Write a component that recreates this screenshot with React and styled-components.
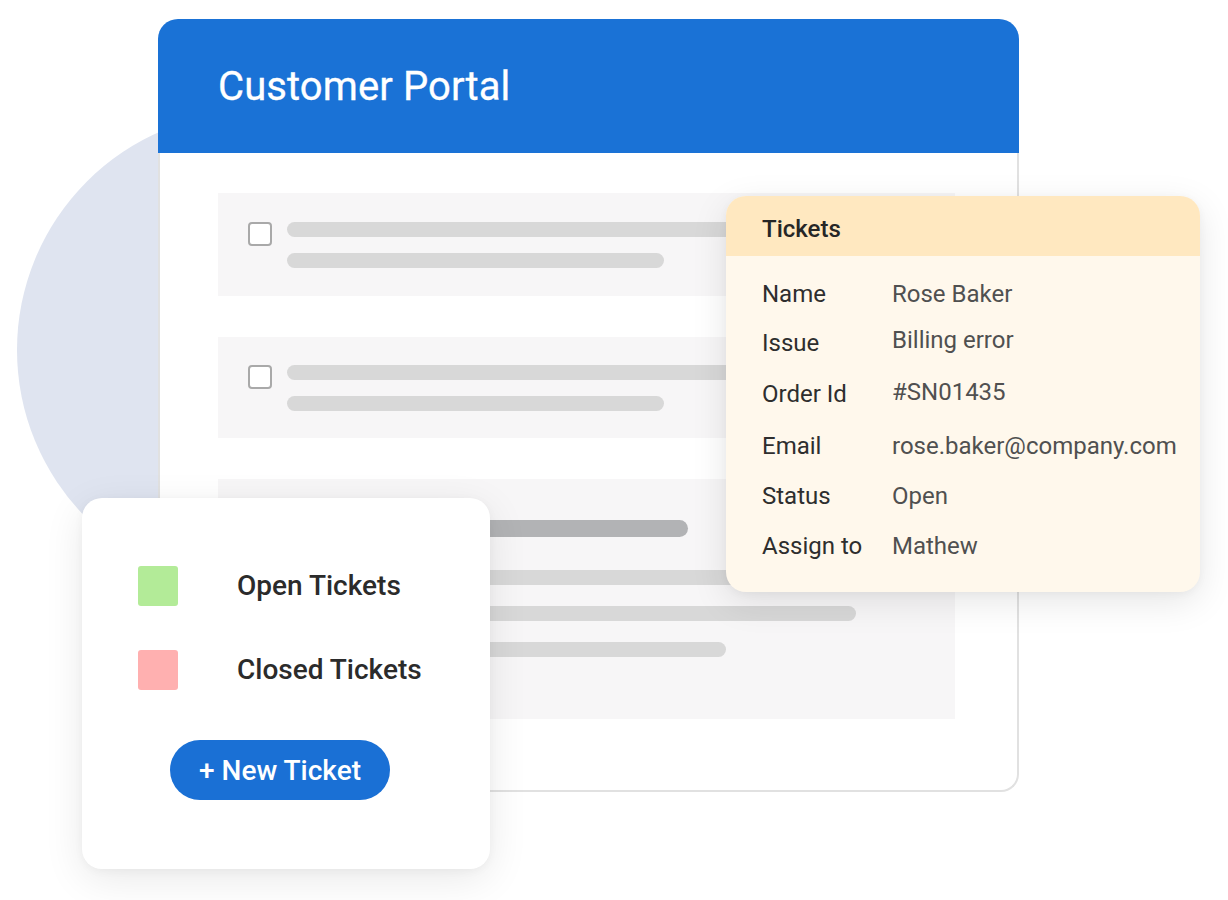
import React from "react";
import styled, { createGlobalStyle } from "styled-components";

const Global = createGlobalStyle`
  html, body { margin: 0; padding: 0; background: #ffffff; }
  body { font-family: Roboto, "Noto Sans", "Liberation Sans", sans-serif; }
  * { box-sizing: border-box; }
`;

const Stage = styled.div`
  position: relative;
  width: 1228px;
  height: 900px;
  overflow: hidden;
  padding: 19px 0 0 158px;
  background: #ffffff;
`;

const Blob = styled.div`
  position: absolute;
  left: 17px;
  top: 112px;
  width: 476px;
  height: 476px;
  border-radius: 50%;
  background: #dfe4f0;
  z-index: 0;
`;

const Window = styled.section`
  position: relative;
  z-index: 1;
  width: 861px;
  height: 773px;
  display: flex;
  flex-direction: column;
`;

const Header = styled.header`
  height: 134px;
  flex: none;
  background: #1a72d6;
  border-radius: 20px 20px 0 0;
  display: flex;
  align-items: center;
  padding-left: 60px;
`;

const Title = styled.h1`
  margin: 0;
  color: #ffffff;
  font-size: 40px;
  font-weight: 400;
  letter-spacing: 0.1px;
  -webkit-text-stroke: 0.3px #ffffff;
`;

const Body = styled.div`
  flex: 1;
  background: #ffffff;
  border: 2px solid #e1e1e1;
  border-top: none;
  border-radius: 0 0 18px 18px;
  padding: 40px 62px 0 58px;
  display: flex;
  flex-direction: column;
  gap: 41px;
`;

const Row = styled.div`
  background: #f7f6f7;
  height: ${(p) => p.$h}px;
  padding: ${(p) => p.$pt}px 0 0 30px;
  display: flex;
  align-items: flex-start;
  gap: 15px;
`;

const Check = styled.span`
  width: 24px;
  height: 24px;
  flex: none;
  border: 2px solid #a9a9a9;
  border-radius: 4px;
  background: #ffffff;
`;

const Lines = styled.div`
  display: flex;
  flex-direction: column;
  gap: ${(p) => p.$gap ?? 16}px;
  padding-left: ${(p) => p.$pl ?? 0}px;
`;

const Bar = styled.div`
  width: ${(p) => p.$w}px;
  height: ${(p) => p.$h || 15}px;
  border-radius: 9px;
  background: ${(p) => (p.$dark ? "#b2b3b5" : "#d8d8d8")};
  margin-top: ${(p) => p.$mt || 0}px;
`;

const LegendCard = styled.div`
  position: absolute;
  left: 82px;
  top: 498px;
  width: 408px;
  height: 371px;
  z-index: 2;
  background: #ffffff;
  border-radius: 20px;
  box-shadow: 0 10px 40px rgba(0, 0, 0, 0.09), 0 2px 10px rgba(0, 0, 0, 0.04);
  padding: 68px 0 0 56px;
  display: flex;
  flex-direction: column;
`;

const LegendItem = styled.div`
  display: flex;
  align-items: center;
  gap: 59px;
  height: 40px;
  margin-bottom: 44px;
`;

const Swatch = styled.span`
  width: 40px;
  height: 40px;
  border-radius: 3px;
  background: ${(p) => p.$color};
  flex: none;
`;

const LegendLabel = styled.span`
  font-size: 28px;
  font-weight: 500;
  color: #2b2b2b;
  transform: translateY(-1px);
`;

const NewButton = styled.button`
  margin: 6px 0 0 32px;
  width: 220px;
  height: 60px;
  border: none;
  border-radius: 30px;
  background: #1a70d5;
  color: #ffffff;
  font-family: Roboto, "Noto Sans", sans-serif;
  font-size: 28px;
  font-weight: 500;
  padding: 0;
  cursor: pointer;
`;

const TicketCard = styled.div`
  position: absolute;
  left: 726px;
  top: 196px;
  width: 474px;
  height: 396px;
  z-index: 3;
  background: #fff8ec;
  border-radius: 20px;
  overflow: hidden;
  box-shadow: 0 10px 36px rgba(0, 0, 0, 0.1), 0 2px 8px rgba(0, 0, 0, 0.04);
`;

const TicketHead = styled.div`
  height: 60px;
  background: #ffe8c0;
  display: flex;
  align-items: center;
  padding: 6px 0 0 36px;
  font-size: 24px;
  font-weight: 500;
  color: #262626;
`;

const Fields = styled.dl`
  margin: 0;
  padding: 23px 0 0 36px;
  display: grid;
  grid-template-columns: 130px 1fr;
  grid-template-rows: 49px 51px 52px 50px 50px 30px;
  font-size: 24px;
  line-height: 30px;
`;

const Label = styled.dt`
  margin: 0;
  color: #2e2e2e;
`;

const Value = styled.dd`
  margin: 0;
  color: #505050;
  transform: translateY(${(p) => p.$lift || 0}px);
`;

const fields = [
  ["Name", "Rose Baker", 0],
  ["Issue", "Billing error", -3],
  ["Order Id", "#SN01435", -2],
  ["Email", "rose.baker@company.com", 0],
  ["Status", "Open", 0],
  ["Assign to", "Mathew", 0],
];

export default function App() {
  return (
    <>
      <Global />
      <Stage>
        <Blob />
        <Window>
          <Header>
            <Title>Customer Portal</Title>
          </Header>
          <Body>
            <Row $h={103} $pt={29}>
              <Check />
              <Lines>
                <Bar $w={540} />
                <Bar $w={377} />
              </Lines>
            </Row>
            <Row $h={101} $pt={28}>
              <Check />
              <Lines>
                <Bar $w={540} />
                <Bar $w={377} />
              </Lines>
            </Row>
            <Row $h={240} $pt={41}>
              <Lines $gap={0} $pl={39}>
                <Bar $w={401} $h={17} $dark />
                <Bar $w={540} $mt={33} />
                <Bar $w={569} $mt={21} />
                <Bar $w={439} $mt={21} />
              </Lines>
            </Row>
          </Body>
        </Window>

        <LegendCard>
          <LegendItem>
            <Swatch $color="#b3eb98" />
            <LegendLabel>Open Tickets</LegendLabel>
          </LegendItem>
          <LegendItem>
            <Swatch $color="#ffb0b0" />
            <LegendLabel>Closed Tickets</LegendLabel>
          </LegendItem>
          <NewButton>+ New Ticket</NewButton>
        </LegendCard>

        <TicketCard>
          <TicketHead>Tickets</TicketHead>
          <Fields>
            {fields.map(([k, v, lift]) => (
              <React.Fragment key={k}>
                <Label>{k}</Label>
                <Value $lift={lift}>{v}</Value>
              </React.Fragment>
            ))}
          </Fields>
        </TicketCard>
      </Stage>
    </>
  );
}
